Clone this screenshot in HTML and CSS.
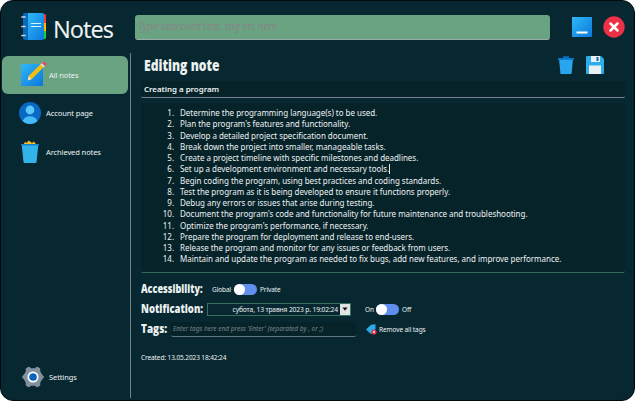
FILE: index.html
```html
<!DOCTYPE html>
<html lang="en">
<head>
<meta charset="utf-8">
<title>Notes</title>
<link rel="stylesheet" href="styles.css">
</head>
<body>
<div class="window">
  <header class="header">
    <div class="brand">
      <svg class="logo" viewBox="0 0 26 28">
        <defs><linearGradient id="blue" x1="0" y1="0" x2="1" y2="1"><stop offset="0" stop-color="#2fb8f5"/><stop offset="1" stop-color="#0b78dc"/></linearGradient></defs>
        <path fill="#f03a42" d="M20 1h3.500q1.500 0 1.500 1.500V10h-5z"/><path fill="#ffb900" d="M20 10h5v9h-5z"/><path fill="#12d53c" d="M20 18h5v6.500q0 1.500-1.500 1.500H20z"/>
        <path fill="#0669bd" d="M2 2q0-2 2-2h4v27H4q-2 0-2-2z"/><path fill="url(#blue)" d="M7 0h14q2 0 2 2v23q0 2-2 2H7z"/>
        <path stroke="#c5d7e3" stroke-width="1.700" stroke-linecap="round" d="M1 4h3M1 13.500h3M1 22.500h3"/><path stroke="#d8f4ff" stroke-width="1.200" d="M10 10.500h10M10 13.500h10"/>
      </svg>
      <span class="brand-name">Notes</span>
    </div>
    <div class="search"><span>Type searched text, tag etc here</span></div>
    <svg class="minimize" viewBox="0 0 20 20"><path fill="url(#blue)" d="M0 0h20v20H0z"/><path stroke="#fff" stroke-width="2" d="M4.500 15.500h11"/></svg>
    <svg class="close" viewBox="0 0 22 22"><circle cx="11" cy="11" r="10.700" fill="#ec3046"/><path stroke="#fff" stroke-width="2.500" stroke-linecap="round" d="M7.500 7.500l7 7m0-7l-7 7"/></svg>
  </header>
  <div class="body">
    <nav class="sidebar">
      <a class="item active">
        <svg class="i-note" viewBox="0 0 26 26"><path fill="url(#blue)" d="M0 3h22v22H0z"/><path fill="#f4bd13" d="M7.500 15L20 2.800l3 2.900-12.600 12.700z"/><path fill="#ffe3b0" d="M7.500 15l3 3.200-3.700 1.200z"/><path fill="#d7dde5" d="M19.500 3.500l1.500-1.500 3 2.900-1.500 1.500z"/><path fill="#e34d67" d="M21 2.300l1.300-1.200q1-.9 2.400.3t.3 2.500l-1.100 1.200z"/></svg>
        <span>All notes</span>
      </a>
      <a class="item">
        <svg class="i-user" viewBox="0 0 22 22"><circle cx="11" cy="11" r="11" fill="#0968c2"/><circle cx="11" cy="8" r="4.400" fill="#5ac8f9"/><path fill="#46bbf7" d="M3.500 19q2-4.800 7.500-4.800t7.500 4.800Q15.500 22 11 22t-7.500-3z"/></svg>
        <span>Account page</span>
      </a>
      <a class="item archive">
        <svg class="i-bin" viewBox="0 0 18 24"><path fill="#f8bb2b" d="M2 5l2-3 2 .8L7.500.5l2 1.300L11 3l2-1.500L15.500 5z"/><path fill="#dd8c18" d="M5 5l3-1.500L10 5zm7 0l1.500-1L15 5z"/><path fill="#32b4eb" d="M.7 5h16.600l-1.800 17q-.1 1-1.200 1H3.700q-1.100 0-1.200-1z"/><path fill="#1683ca" d="M0 4h18v1.500H0z"/></svg>
        <span>Archieved notes</span>
      </a>
      <a class="item settings">
        <svg class="i-gear" viewBox="0 0 22 22"><path fill="#83909d" stroke="#83909d" stroke-width="1.500" stroke-linejoin="round" d="M7 1.500l2 1.500h4l2-1.500 2.500 1.500v2.500L19.500 9l1.700 2-1.700 2-2 3.500V19L15 20.500 13 19H9l-2 1.500L4.500 19v-2.500L2.500 13 .8 11l1.700-2 2-3.500V3z"/><circle cx="11" cy="11" r="4.700" fill="#0865bb" stroke="#fff" stroke-width="1.700"/></svg>
        <span>Settings</span>
      </a>
    </nav>
    <main class="main">
      <div class="title-row">
        <h1>Editing note</h1>
        <svg class="i-trash" viewBox="0 0 16 18"><path fill="#28a5ec" d="M1 3h14l-1.500 15h-11z"/><path fill="#0872c8" d="M0 2h5V.3h6V2h5v1.800H0z"/></svg>
        <svg class="i-save" viewBox="0 0 18 18"><path fill="#2daeea" d="M0 1q0-1 1-1h14l3 3v14q0 1-1 1H1q-1 0-1-1z"/><path fill="#e9f1f5" d="M5 0h9v6H5zM3 9.500h12V18H3z"/><path fill="#1467a6" d="M10.500 1h2v4h-2z"/></svg>
      </div>
      <div class="note-name"><span>Creating a program</span></div>
      <ol class="editor">
        <li><span>Determine the programming language(s) to be used.</span></li>
        <li><span>Plan the program's features and functionality.</span></li>
        <li><span>Develop a detailed project specification document.</span></li>
        <li><span>Break down the project into smaller, manageable tasks.</span></li>
        <li><span>Create a project timeline with specific milestones and deadlines.</span></li>
        <li><span>Set up a development environment and necessary tools.</span><i class="caret"></i></li>
        <li><span>Begin coding the program, using best practices and coding standards.</span></li>
        <li><span>Test the program as it is being developed to ensure it functions properly.</span></li>
        <li><span>Debug any errors or issues that arise during testing.</span></li>
        <li><span>Document the program's code and functionality for future maintenance and troubleshooting.</span></li>
        <li><span>Optimize the program's performance, if necessary.</span></li>
        <li><span>Prepare the program for deployment and release to end-users.</span></li>
        <li><span>Release the program and monitor for any issues or feedback from users.</span></li>
        <li><span>Maintain and update the program as needed to fix bugs, add new features, and improve performance.</span></li>
      </ol>
      <div class="row">
        <h2 class="h-access">Accessibility:</h2>
        <span class="global">Global</span><span class="toggle"></span><span class="after">Private</span>
      </div>
      <div class="row">
        <h2 class="h-notif">Notification:</h2>
        <div class="date"><span>субота, 13 травня 2023 р. 19:02:24</span><b><svg viewBox="0 0 6 4"><path fill="#111" d="M.5.500h5L3 3.800z"/></svg></b></div>
        <span class="on">On</span><span class="toggle"></span><span class="after">Off</span>
      </div>
      <div class="row">
        <h2 class="h-tags">Tags:</h2>
        <div class="tag-input"><span>Enter tags here end press 'Enter' (separated by , or ;)</span></div>
        <svg class="i-tag" viewBox="0 0 11 11"><path fill="#2badea" d="M0 5.500L5 .7 9.500.3v5L5 10z"/><circle cx="8" cy="8" r="2.600" fill="#e72f48"/><path stroke="#fff" stroke-width=".7" d="M7 7l2 2m0-2L7 9"/></svg>
        <span class="remove">Remove all tags</span>
      </div>
      <p class="created">Created: 13.05.2023 18:42:24</p>
    </main>
  </div>
</div>
</body>
</html>
```
FILE: styles.css
```css
* { box-sizing: border-box; }
body { margin: 0; background: #fff; width: 635px; height: 401px; overflow: hidden; font: 7.5px/11px "Noto Sans", "Open Sans", sans-serif; color: #edf2f2; }
svg { display: block; flex: none; }
span { white-space: nowrap; }
.window { height: 401px; border: 1px solid #000a0d; border-radius: 13px; background: #082831; overflow: hidden; display: flex; flex-direction: column; }
.header { height: 52px; flex: none; display: flex; align-items: center; }
.brand { width: 134px; padding-left: 20px; display: flex; align-items: center; gap: 6px; }
.logo { width: 26px; height: 28px; }
.brand-name { font-size: 23.500px; line-height: 30px; letter-spacing: -1px; margin-top: 3px; }
.search { width: 415px; height: 25px; border-radius: 3px; background: #69a382; border-bottom: 1px solid #9bacaa; display: flex; align-items: center; padding-left: 3px; font-size: 10px; font-style: italic; color: #858585; }
.minimize { width: 20px; height: 20px; margin-left: 22px; }
.close { width: 22px; height: 22px; margin-left: 11px; }
.body { flex: 1; display: flex; min-height: 0; }
.sidebar { width: 129px; padding: 3px 2px 4px 1px; display: flex; flex-direction: column; }
.item { height: 38px; flex: none; border-radius: 6px; display: flex; align-items: center; padding-left: 17px; gap: 5px; letter-spacing: -.1px; }
.active { background: #69a382; gap: 2px; padding-left: 19px; }
.active span { margin-top: 1px; }
.archive { margin-top: 1px; }
.i-note { width: 26px; height: 26px; margin-top: -3px; }
.i-user { width: 22px; height: 22px; }
.i-bin { width: 18px; height: 24px; margin: 0 2px; }
.settings { margin-top: auto; padding-left: 20px; }
.i-gear { width: 22px; height: 22px; }
.main { flex: 1; border-left: 1px solid #718389; margin-bottom: 2px; padding: 0 9px 0 10px; }
.title-row { height: 28px; display: flex; align-items: center; padding: 0 21px 4px 3px; }
h1, h2 { margin: 0; font-family: "Open Sans", "Noto Sans", sans-serif; font-weight: 800; white-space: nowrap; transform-origin: left center; }
h1 { font-size: 15px; line-height: 20px; width: 414px; transform: scaleX(.81); }
.i-trash { width: 16px; height: 18px; }
.i-save { width: 18px; height: 18px; margin-left: 12px; }
.note-name { height: 17px; background: #07232a; border-bottom: 1px solid #71868b; border-radius: 2px; display: flex; align-items: center; padding-left: 3px; font-size: 7.900px; font-weight: 600; }
.editor { list-style: none; counter-reset: n; margin: 5px 0 0; height: 170px; padding: 4px 0 0; background: #07232a; border-bottom: 1px solid #326c58; border-radius: 2px; font-size: 8px; letter-spacing: -.03px; }
.editor li { counter-increment: n; height: 11.270px; line-height: 11.270px; display: flex; align-items: center; }
.editor li::before { content: counter(n) "."; width: 33px; text-align: right; margin-right: 6px; }
.caret { width: 1px; height: 10px; background: #dce4e4; }
.row { height: 20px; display: flex; align-items: center; }
.editor + .row { margin-top: 6px; }
h2 { font-size: 12px; line-height: 14px; }
.h-access { width: 71px; transform: scaleX(.76); }
.h-notif { width: 66px; transform: scaleX(.79); }
.h-tags { width: 30px; transform: scaleX(.83); }
.row > span { font-size: 6.500px; letter-spacing: -.1px; }
.global { width: 22px; }
.row > .toggle { width: 23px; height: 11px; border-radius: 6px; background: #5f8eed; }
.toggle::before { content: ""; display: block; width: 11px; height: 11px; border-radius: 50%; background: #fff; }
.after { margin-left: 3px; }
.date { width: 144px; height: 13px; border: 1px solid #37705e; display: flex; align-items: stretch; justify-content: flex-end; font-size: 6.700px; letter-spacing: -.13px; }
.date b { width: 10px; margin-left: 2px; background: #e2e4e4; display: flex; align-items: center; justify-content: center; }
.date b svg { width: 6px; height: 4px; }
.on { margin-left: 14px; width: 11px; }
.tag-input { width: 185px; height: 15px; border-bottom: 1px solid #61777d; border-radius: 2px; background: #07232a; display: flex; align-items: center; padding-left: 2px; font-size: 6.500px; font-style: italic; color: #78868a; }
.i-tag { width: 11px; height: 11px; margin: 0 2px 0 10px; }
.created { margin: 13px 0 0; font-size: 6.500px; letter-spacing: -.1px; }
```
